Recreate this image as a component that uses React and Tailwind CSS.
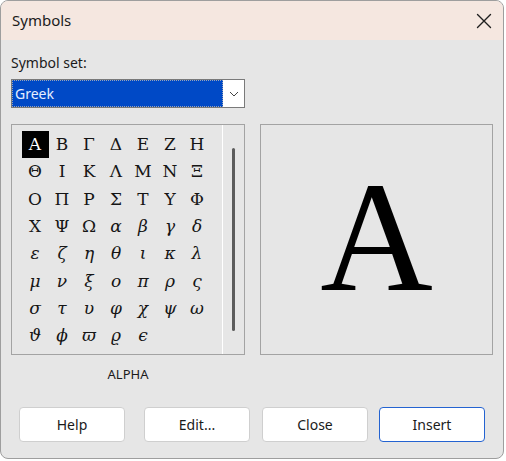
const ui = { fontFamily: '"Noto Sans", "Open Sans", sans-serif' }
const serif = { fontFamily: '"Liberation Serif", "DejaVu Serif", serif' }
const gridFont = { fontFamily: '"DejaVu Serif", "Liberation Serif", serif' }

const upper = ['Α', 'Β', 'Γ', 'Δ', 'Ε', 'Ζ', 'Η', 'Θ', 'Ι', 'Κ', 'Λ', 'Μ', 'Ν', 'Ξ', 'Ο', 'Π', 'Ρ', 'Σ', 'Τ', 'Υ', 'Φ', 'Χ', 'Ψ', 'Ω']
const lower = ['α', 'β', 'γ', 'δ', 'ε', 'ζ', 'η', 'θ', 'ι', 'κ', 'λ', 'μ', 'ν', 'ξ', 'ο', 'π', 'ρ', 'ς', 'σ', 'τ', 'υ', 'φ', 'χ', 'ψ', 'ω', 'ϑ', 'ϕ', 'ϖ', 'ϱ', 'ϵ']

function Button({ children, primary }) {
  return (
    <button
      className={`h-[35px] w-[106px] rounded-[4px] bg-white text-[14px] text-[#1a1a1a] ${
        primary ? 'border-[1.5px] border-[#2463d1]' : 'border border-[#cfcfcf]'
      }`}
      style={ui}
    >
      {children}
    </button>
  )
}

export default function App() {
  const symbols = [...upper.map((c) => ({ c, it: false })), ...lower.map((c) => ({ c, it: true }))]

  return (
    <div className="w-[506px] h-[461px] bg-white">
      <div className="w-[504px] h-[459px] rounded-[8px] border border-[#9e9e9e] overflow-hidden bg-[#e6e6e6] flex flex-col" style={ui}>
        <div className="h-[39px] shrink-0 bg-[#f5e7e0] flex items-center justify-between pl-[11px] pr-[11px]">
          <span className="text-[15px] text-[#1b1b1b]">Symbols</span>
          <svg width="16" height="16" viewBox="0 0 16 16" fill="none" stroke="#1f1f1f" strokeWidth="1.4" strokeLinecap="round">
            <path d="M1.5 1.5l13 13M14.5 1.5l-13 13" />
          </svg>
        </div>

        <div className="px-[10px] flex flex-col">
          <div className="mt-[13px] leading-[20px] text-[14px] text-[#1b1b1b]">Symbol set:</div>

          <div className="mt-[6px] w-[234px] h-[29px] border border-[#7a7a7a] flex">
            <div className="flex-1 bg-[#0049c6] border border-dotted border-[#9aa4b8] flex items-center pl-[2px] text-[14px] text-[#e6eeff]">
              Greek
            </div>
            <div className="w-[21px] bg-white flex items-center justify-center">
              <svg width="10" height="6" viewBox="0 0 10 6" fill="none" stroke="#444" strokeWidth="1">
                <path d="M1 1l4 4 4-4" />
              </svg>
            </div>
          </div>

          <div className="mt-[16px] flex gap-[15px]">
            <div className="w-[234px] h-[231px] border border-[#a3a3a3] flex">
              <div className="flex-1 pl-[9.5px] pt-[6px]">
                <div className="grid grid-cols-[repeat(7,27px)] auto-rows-[27.3px]" style={gridFont}>
                  {symbols.map(({ c, it }, i) => (
                    <div
                      key={i}
                      className={`flex items-center justify-center text-[17px] leading-none ${it ? 'italic' : ''} ${
                        i === 0 ? 'bg-black text-white' : 'text-[#151515]'
                      }`}
                    >
                      {c}
                    </div>
                  ))}
                </div>
              </div>
              <div className="w-[22px] border-l border-white flex justify-center py-[23px]">
                <div className="w-[2.5px] bg-[#5c5c5c] rounded-full" />
              </div>
            </div>

            <div className="w-[233px] h-[231px] border border-[#a3a3a3] flex items-center justify-center pb-[4px]">
              <span className="text-[156px] leading-none text-black" style={serif}>
                Α
              </span>
            </div>
          </div>

          <div className="mt-[9px] w-[234px] leading-[20px] text-center text-[13px] text-[#1b1b1b]">ALPHA</div>

          <div className="mt-[23px] flex">
            <div className="ml-[8px]">
              <Button>Help</Button>
            </div>
            <div className="ml-[19px]">
              <Button>Edit...</Button>
            </div>
            <div className="ml-[12px]">
              <Button>Close</Button>
            </div>
            <div className="ml-[11px]">
              <Button primary>Insert</Button>
            </div>
          </div>
        </div>
      </div>
    </div>
  )
}
